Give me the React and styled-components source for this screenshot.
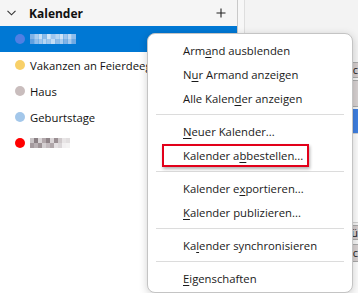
import React from "react";
import styled, { createGlobalStyle } from "styled-components";

const Global = createGlobalStyle`
  html, body { margin: 0; padding: 0; background: #fff; }
  body { font-family: "Open Sans", "Noto Sans", sans-serif; }
`;

const Screen = styled.div`
  position: relative;
  width: 358px;
  height: 293px;
  overflow: hidden;
  display: flex;
  background: #fff;
`;

const Sidebar = styled.div`
  width: 237px;
  flex-shrink: 0;
  background: #fff;
  border-right: 1px solid #c9c9c9;
`;

const Header = styled.div`
  height: 26px;
  display: flex;
  align-items: center;
  padding: 0 11px 0 7px;
  box-sizing: border-box;
  background: #f5f5f5;
`;

const HeaderTitle = styled.div`
  flex: 1;
  margin-left: 13px;
  font-size: 12px;
  font-weight: 700;
  color: #111;
`;

const Row = styled.div`
  height: 26px;
  display: flex;
  align-items: center;
  padding-left: 15px;
  gap: 5px;
  font-size: 11.3px;
  color: #111;
  white-space: nowrap;
  background: ${(p) => (p.$active ? "#0078d4" : "transparent")};
`;

const Dot = styled.span`
  width: 10px;
  height: 10px;
  border-radius: 50%;
  flex-shrink: 0;
  background: ${(p) => p.$color};
`;

const Splitter = styled.div`
  width: 6px;
  flex-shrink: 0;
  background: #f7f7f7;
  border-right: 1px solid #dedede;
`;

const Pane = styled.div`
  flex: 1;
  background: #f3f3f3;
  display: flex;
  flex-direction: column;
  padding-top: 62px;
`;

const Strip = styled.div`
  height: ${(p) => p.$h}px;
  margin-top: ${(p) => p.$mt || 0}px;
  background: ${(p) => p.$bg};
  border-top: 1px solid ${(p) => p.$line || "transparent"};
  border-bottom: 1px solid ${(p) => p.$line || "transparent"};
  display: flex;
  align-items: center;
  justify-content: flex-end;
  font-size: 11px;
  color: #222;
  overflow: hidden;
`;

const Menu = styled.div`
  position: absolute;
  left: 147px;
  top: 33px;
  width: 206px;
  box-sizing: border-box;
  padding: 4px 0 2px;
  background: #fff;
  border: 1px solid #c4c4c4;
  border-radius: 8px;
  box-shadow: 0 2px 8px rgba(0, 0, 0, 0.18);
  z-index: 2;
`;

const Item = styled.div`
  position: relative;
  height: 24px;
  display: flex;
  align-items: center;
  padding-left: 35px;
  font-size: 11.3px;
  color: #1a1a1a;
  white-space: nowrap;

  u {
    text-decoration-thickness: 1px;
    text-underline-offset: 2px;
  }
`;

const Separator = styled.div`
  height: 1px;
  margin: 4px 8px;
  background: #dcdcdc;
`;

const Highlight = styled.div`
  position: absolute;
  left: 14px;
  top: 1px;
  width: 147px;
  height: 23px;
  box-sizing: border-box;
  border: 2px solid #e2001a;
  box-shadow: 1px 2px 3px rgba(0, 0, 0, 0.3);
  pointer-events: none;
`;

const Cursor = styled.svg`
  position: absolute;
  left: 149px;
  top: 197px;
  z-index: 1;
`;

const Chevron = () => (
  <svg width="9" height="6" viewBox="0 0 9 6">
    <path d="M0.5 0.8 L4.5 4.8 L8.5 0.8" fill="none" stroke="#333" strokeWidth="1.1" />
  </svg>
);

const Plus = () => (
  <svg width="10" height="10" viewBox="0 0 10 10">
    <path d="M5 0.5 V9.5 M0.5 5 H9.5" stroke="#222" strokeWidth="1.1" />
  </svg>
);

// verpixelter Name
const Mosaic = ({ colors, width }) => (
  <svg width={width} height="10" viewBox={`0 0 ${colors.length * 4} 10`} preserveAspectRatio="none">
    {colors.map((c, i) => (
      <g key={i}>
        <rect x={i * 4} y="0" width="4" height="5" fill={c[0]} />
        <rect x={i * 4} y="5" width="4" height="5" fill={c[1]} />
      </g>
    ))}
  </svg>
);

const selectedName = [
  ["#7fb2e6", "#5f9fe0"],
  ["#a9cdf0", "#8fbdec"],
  ["#c9e0f6", "#9fc6ee"],
  ["#8cbbe9", "#b6d5f3"],
  ["#d5e7f8", "#a2c8ee"],
  ["#9ec5ee", "#c3dcf5"],
  ["#b8d6f3", "#8ebcea"],
  ["#cfe3f7", "#a9cdf0"],
  ["#9ec5ee", "#7fb2e6"],
  ["#c2dbf5", "#a6caef"],
  ["#8fbdec", "#6ea9e3"],
];

const redName = [
  ["#c9c4c6", "#a49a9e"],
  ["#8a8084", "#b8b0b3"],
  ["#d9d4d6", "#9d9396"],
  ["#b3a9ac", "#d4cfd1"],
  ["#8f8488", "#c2babd"],
  ["#dad5d7", "#b0a7aa"],
  ["#9a8f93", "#e4e0e2"],
  ["#cfc9cb", "#dad6d8"],
  ["#e8e5e6", "#f2f0f1"],
  ["#e2dfe0", "#f4f3f3"],
];

export default function App() {
  return (
    <>
      <Global />
      <Screen>
        <Sidebar>
          <Header>
            <Chevron />
            <HeaderTitle>Kalender</HeaderTitle>
            <Plus />
          </Header>
          <Row $active>
            <Dot $color="#4f7fe3" />
            <Mosaic colors={selectedName} width={46} />
          </Row>
          <Row>
            <Dot $color="#f8d068" />
            Vakanzen an Feierdeeg
          </Row>
          <Row>
            <Dot $color="#c9bdbd" />
            Haus
          </Row>
          <Row>
            <Dot $color="#a3c7ea" />
            Geburtstage
          </Row>
          <Row>
            <Dot $color="#ff0000" />
            <Mosaic colors={redName} width={40} />
          </Row>
        </Sidebar>
        <Splitter />
        <Pane>
          <Strip $h={14} $bg="#d3cccc" $line="#a9a9a9">c</Strip>
          <Strip $h={26} $mt={2} $bg="#d6d0d0" $line="#a9a9a9" />
          <Strip $h={22} $mt={2} $bg="#3f7fe0" />
          <Strip $h={90} $bg="#fbfbfb" $line="#cfcfcf" />
          <Strip $h={13} $mt={2} $bg="#d3cccc" $line="#a9a9a9">ü</Strip>
          <Strip $h={16} $mt={4} $bg="#d6d0d0" $line="#a9a9a9">c</Strip>
          <Strip $h={30} $bg="#fbfbfb" />
        </Pane>

        <Cursor width="14" height="20" viewBox="0 0 14 20">
          <path
            d="M1 1 V15.5 L4.6 12.2 L7.2 18 L9.4 17 L6.9 11.4 L11.6 11.4 Z"
            fill="#fff"
            stroke="#111"
            strokeWidth="1"
            strokeLinejoin="round"
          />
        </Cursor>

        <Menu>
          <Item>Arm<u>a</u>nd ausblenden</Item>
          <Item>N<u>u</u>r Armand anzeigen</Item>
          <Item>Alle Kalen<u>d</u>er anzeigen</Item>
          <Separator />
          <Item><u>N</u>euer Kalender...</Item>
          <Item>
            Kalender a<u>b</u>bestellen...
            <Highlight />
          </Item>
          <Separator />
          <Item>Kalender e<u>x</u>portieren...</Item>
          <Item><u>K</u>alender publizieren...</Item>
          <Separator />
          <Item>Ka<u>l</u>ender synchronisieren</Item>
          <Separator />
          <Item><u>E</u>igenschaften</Item>
        </Menu>
      </Screen>
    </>
  );
}
